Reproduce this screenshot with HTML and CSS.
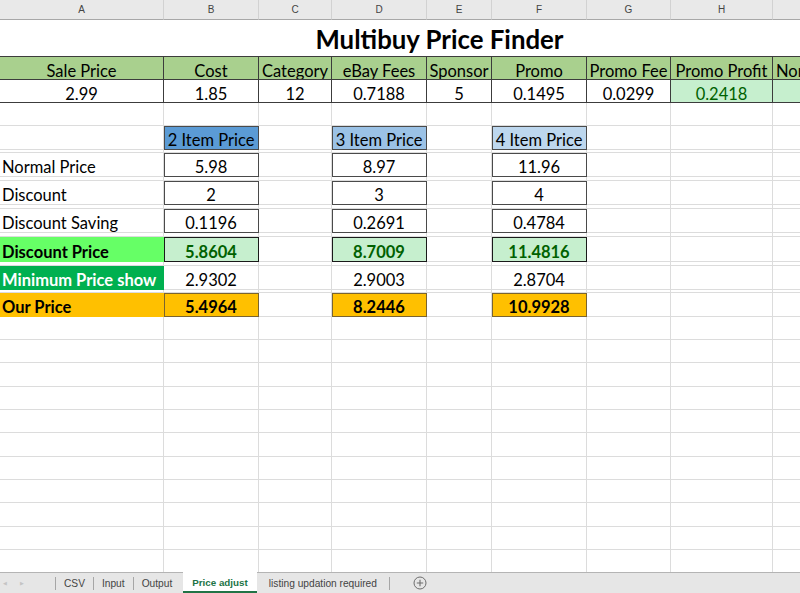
FILE: index.html
```html
<!DOCTYPE html>
<html lang="en">
<head>
<meta charset="utf-8">
<title>Multibuy Price Finder</title>
<link rel="stylesheet" href="styles.css">
</head>
<body>
<div class="app">
  <div class="sheet">
    <div class="row colhdr">
      <div class="h">A</div><div class="h">B</div><div class="h">C</div><div class="h">D</div><div class="h">E</div><div class="h">F</div><div class="h">G</div><div class="h">H</div><div class="h"></div>
    </div>
    <div class="row title-row">
      <div class="title">Multibuy Price Finder</div>
    </div>
    <div class="row r23 labels">
      <div class="c">Sale Price</div><div class="c">Cost</div><div class="c">Category</div><div class="c">eBay Fees</div><div class="c">Sponsor</div><div class="c">Promo</div><div class="c">Promo Fee</div><div class="c">Promo Profit</div><div class="c l clip">Normal Profit</div>
    </div>
    <div class="row r23 values">
      <div class="c">2.99</div><div class="c">1.85</div><div class="c">12</div><div class="c">0.7188</div><div class="c">5</div><div class="c">0.1495</div><div class="c">0.0299</div><div class="c good">0.2418</div><div class="c good"></div>
    </div>
    <div class="row r23"><div class="c"></div><div class="c"></div><div class="c"></div><div class="c"></div><div class="c"></div><div class="c"></div><div class="c"></div><div class="c"></div><div class="c"></div></div>
    <div class="row r24">
      <div class="c"></div><div class="c box blue1">2 Item Price</div><div class="c"></div><div class="c box blue2">3 Item Price</div><div class="c"></div><div class="c box blue3">4 Item Price</div><div class="c"></div><div class="c"></div><div class="c"></div>
    </div>
    <div class="row thin3"><div class="c"></div><div class="c"></div><div class="c"></div><div class="c"></div><div class="c"></div><div class="c"></div><div class="c"></div><div class="c"></div><div class="c"></div></div>
    <div class="row r24">
      <div class="c l">Normal Price</div><div class="c box">5.98</div><div class="c"></div><div class="c box">8.97</div><div class="c"></div><div class="c box">11.96</div><div class="c"></div><div class="c"></div><div class="c"></div>
    </div>
    <div class="row thin4"><div class="c"></div><div class="c"></div><div class="c"></div><div class="c"></div><div class="c"></div><div class="c"></div><div class="c"></div><div class="c"></div><div class="c"></div></div>
    <div class="row r24">
      <div class="c l">Discount</div><div class="c box">2</div><div class="c"></div><div class="c box">3</div><div class="c"></div><div class="c box">4</div><div class="c"></div><div class="c"></div><div class="c"></div>
    </div>
    <div class="row thin4"><div class="c"></div><div class="c"></div><div class="c"></div><div class="c"></div><div class="c"></div><div class="c"></div><div class="c"></div><div class="c"></div><div class="c"></div></div>
    <div class="row r24">
      <div class="c l">Discount Saving</div><div class="c box">0.1196</div><div class="c"></div><div class="c box">0.2691</div><div class="c"></div><div class="c box">0.4784</div><div class="c"></div><div class="c"></div><div class="c"></div>
    </div>
    <div class="row thin4"><div class="c"></div><div class="c"></div><div class="c"></div><div class="c"></div><div class="c"></div><div class="c"></div><div class="c"></div><div class="c"></div><div class="c"></div></div>
    <div class="row r25">
      <div class="c l b fill-lime">Discount Price</div><div class="c box dp">5.8604</div><div class="c"></div><div class="c box dp">8.7009</div><div class="c"></div><div class="c box dp">11.4816</div><div class="c"></div><div class="c"></div><div class="c"></div>
    </div>
    <div class="row thin4"><div class="c"></div><div class="c"></div><div class="c"></div><div class="c"></div><div class="c"></div><div class="c"></div><div class="c"></div><div class="c"></div><div class="c"></div></div>
    <div class="row r24">
      <div class="c l b fill-green">Minimum Price show</div><div class="c">2.9302</div><div class="c"></div><div class="c">2.9003</div><div class="c"></div><div class="c">2.8704</div><div class="c"></div><div class="c"></div><div class="c"></div>
    </div>
    <div class="row thin3"><div class="c"></div><div class="c"></div><div class="c"></div><div class="c"></div><div class="c"></div><div class="c"></div><div class="c"></div><div class="c"></div><div class="c"></div></div>
    <div class="row r24">
      <div class="c l b fill-gold">Our Price</div><div class="c box our">5.4964</div><div class="c"></div><div class="c box our">8.2446</div><div class="c"></div><div class="c box our">10.9928</div><div class="c"></div><div class="c"></div><div class="c"></div>
    </div>
    <div class="row r23"><div class="c"></div><div class="c"></div><div class="c"></div><div class="c"></div><div class="c"></div><div class="c"></div><div class="c"></div><div class="c"></div><div class="c"></div></div>
    <div class="row r23"><div class="c"></div><div class="c"></div><div class="c"></div><div class="c"></div><div class="c"></div><div class="c"></div><div class="c"></div><div class="c"></div><div class="c"></div></div>
    <div class="row r24"><div class="c"></div><div class="c"></div><div class="c"></div><div class="c"></div><div class="c"></div><div class="c"></div><div class="c"></div><div class="c"></div><div class="c"></div></div>
    <div class="row r23"><div class="c"></div><div class="c"></div><div class="c"></div><div class="c"></div><div class="c"></div><div class="c"></div><div class="c"></div><div class="c"></div><div class="c"></div></div>
    <div class="row r23"><div class="c"></div><div class="c"></div><div class="c"></div><div class="c"></div><div class="c"></div><div class="c"></div><div class="c"></div><div class="c"></div><div class="c"></div></div>
    <div class="row r24"><div class="c"></div><div class="c"></div><div class="c"></div><div class="c"></div><div class="c"></div><div class="c"></div><div class="c"></div><div class="c"></div><div class="c"></div></div>
    <div class="row r23"><div class="c"></div><div class="c"></div><div class="c"></div><div class="c"></div><div class="c"></div><div class="c"></div><div class="c"></div><div class="c"></div><div class="c"></div></div>
    <div class="row r23"><div class="c"></div><div class="c"></div><div class="c"></div><div class="c"></div><div class="c"></div><div class="c"></div><div class="c"></div><div class="c"></div><div class="c"></div></div>
    <div class="row r24"><div class="c"></div><div class="c"></div><div class="c"></div><div class="c"></div><div class="c"></div><div class="c"></div><div class="c"></div><div class="c"></div><div class="c"></div></div>
    <div class="row r23"><div class="c"></div><div class="c"></div><div class="c"></div><div class="c"></div><div class="c"></div><div class="c"></div><div class="c"></div><div class="c"></div><div class="c"></div></div>
    <div class="row r23"><div class="c"></div><div class="c"></div><div class="c"></div><div class="c"></div><div class="c"></div><div class="c"></div><div class="c"></div><div class="c"></div><div class="c"></div></div>
  </div>
  <div class="tabs">
    <span class="nav">&#9664;</span><span class="nav">&#9654;</span>
    <span class="sep"></span>
    <span class="tab">CSV</span><span class="sep"></span>
    <span class="tab">Input</span><span class="sep"></span>
    <span class="tab">Output</span>
    <span class="tab active">Price adjust</span>
    <span class="tab">listing updation required</span><span class="sep"></span>
    <span class="add"><svg width="14" height="14" viewBox="0 0 14 14"><circle cx="7" cy="7" r="6" fill="none" stroke="#6d6d6d" stroke-width="1"/><path d="M7 3.8v6.4M3.8 7h6.4" stroke="#6d6d6d" stroke-width="1.1"/></svg></span>
  </div>
</div>
</body>
</html>
```

FILE: styles.css
```css
html, body {
  margin: 0;
  padding: 0;
  background: #ffffff;
}

.app {
  width: 800px;
  height: 593px;
  overflow: hidden;
  display: flex;
  flex-direction: column;
  font-family: Lato, "Liberation Sans", sans-serif;
  color: #000;
}

.sheet {
  height: 572px;
  overflow: hidden;
  flex: none;
}

.row {
  display: grid;
  grid-template-columns: 164px 95px 73px 95px 65px 95px 84px 102px 200px;
  width: 973px;
}

.c {
  box-sizing: border-box;
  border-right: 1px solid #dcdcdc;
  border-bottom: 1px solid #dcdcdc;
  display: flex;
  align-items: center;
  justify-content: center;
  white-space: nowrap;
  overflow: hidden;
  font-size: 16.5px;
  padding-top: 5px;
}

.l {
  justify-content: flex-start;
  padding-left: 2px;
}

.clip {
  padding-left: 3px;
}

.b {
  font-weight: 700;
}

/* column headers */
.colhdr {
  height: 20px;
  background: #e9e9e9;
}

.h {
  box-sizing: border-box;
  border-right: 1px solid #d2d2d2;
  border-bottom: 1px solid #a8a8a8;
  display: flex;
  align-items: center;
  justify-content: center;
  font-family: "Liberation Sans", Arial, sans-serif;
  font-size: 10px;
  color: #444;
}

/* title */
.title-row {
  height: 37px;
  display: block;
  box-sizing: border-box;
  border-bottom: 1px solid #3c3c3c;
}

.title {
  width: 800px;
  height: 36px;
  display: flex;
  align-items: center;
  justify-content: center;
  padding-left: 79px;
  box-sizing: border-box;
  font-size: 25.8px;
  font-weight: 700;
  padding-top: 2px;
}

.r23 { height: 23px; }
.r24 { height: 24px; }
.r25 { height: 25px; }
.thin3 { height: 3px; }
.thin4 { height: 4px; }

.thin3 .c, .thin4 .c {
  padding-top: 0;
}

.labels .c {
  background: #a9d08e;
  border-color: #3c3c3c;
}

.values .c {
  border-color: #3c3c3c;
}

.good {
  background: #c6efce;
  color: #006100;
}

.box {
  outline: 1px solid #4a4a4a;
  outline-offset: -1px;
}

.blue1 { background: #5b9bd5; }
.blue2 { background: #9bc2e6; }
.blue3 { background: #bdd7ee; }

.dp {
  background: #c6efce;
  color: #006100;
  font-weight: 700;
  outline-color: #1a1a1a;
}

.our {
  background: #ffc000;
  font-weight: 700;
  outline-color: #7a6430;
}

.fill-lime {
  background: #66ff66;
  border-color: transparent;
}

.fill-green {
  background: #00b050;
  color: #ffffff;
  border-color: transparent;
}

.fill-gold {
  background: #ffc000;
  border-color: transparent;
}

/* sheet tabs */
.tabs {
  height: 21px;
  flex: none;
  box-sizing: border-box;
  background: #e6e6e6;
  border-top: 1px solid #b4b4b4;
  display: flex;
  align-items: center;
  font-family: "Liberation Sans", Arial, sans-serif;
  font-size: 10.2px;
  color: #444;
}

.nav {
  font-size: 5px;
  color: #c4c4c4;
  width: 17px;
  padding-left: 3px;
  box-sizing: border-box;
}

.nav + .nav {
  width: 38px;
}

.sep {
  width: 1px;
  height: 13px;
  background: #a6a6a6;
  flex: none;
}

.tab {
  padding: 0 8px;
  height: 20px;
  display: flex;
  align-items: center;
}

.tab.active {
  margin-left: 3px;
  padding: 1px 9px 0 9px;
  background: #ffffff;
  color: #217346;
  font-weight: 700;
  font-size: 9.8px;
  height: 21px;
  margin-top: -1px;
  box-sizing: border-box;
  border-bottom: 2px solid #217346;
}

.tab.active + .tab {
  padding-left: 12px;
  padding-right: 12px;
}

.add {
  margin-left: 23px;
  display: flex;
  align-items: center;
}
```
